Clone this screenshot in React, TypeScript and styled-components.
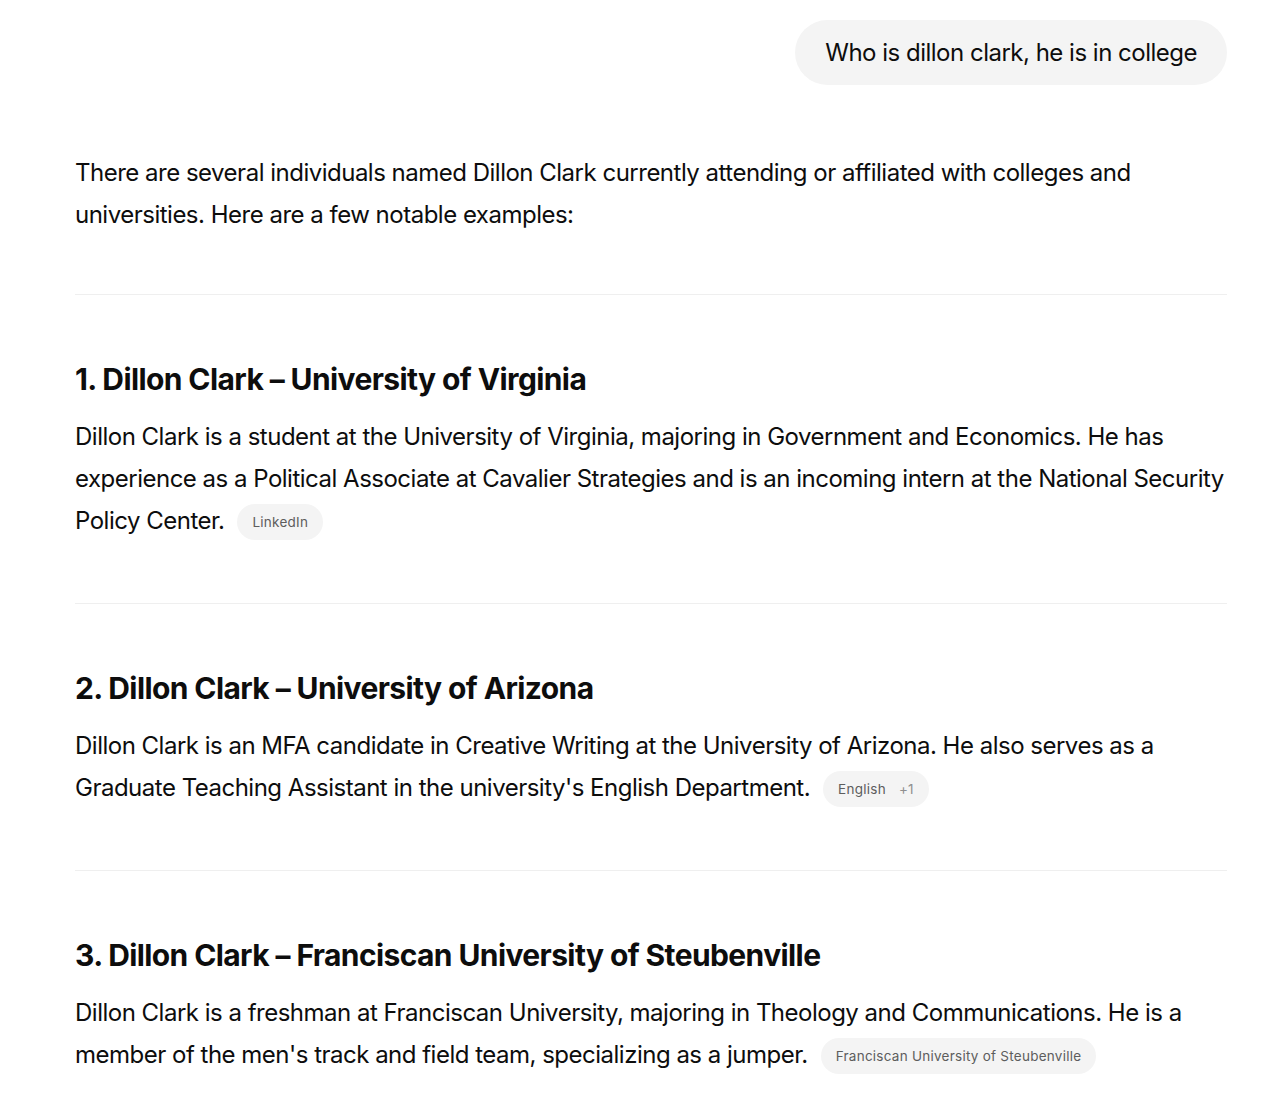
import React from "react";
import styled, { createGlobalStyle } from "styled-components";

const Global = createGlobalStyle`
  html, body { margin: 0; padding: 0; background: #ffffff; }
  body { font-family: Inter, "Noto Sans", "Liberation Sans", sans-serif; color: #0d0d0d; -webkit-font-smoothing: antialiased; }
`;

const Page = styled.main`
  width: 1152px;
  padding: 20px 0 40px 75px;
`;

const UserRow = styled.div`
  display: flex;
  justify-content: flex-end;
`;

const Bubble = styled.div`
  background: #f4f4f4;
  border-radius: 33px;
  padding: 15px 30px 15px 30px;
  font-size: 24px;
  line-height: 35px;
  letter-spacing: -0.5px;
  color: #0d0d0d;
`;

const Answer = styled.article`
  margin-top: 67px;
`;

const Para = styled.p`
  margin: 0;
  font-size: 24px;
  line-height: 42px;
  letter-spacing: -0.5px;
  color: #0d0d0d;
`;

const Divider = styled.hr<{ $first?: boolean }>`
  border: 0;
  height: 1px;
  background: #efefef;
  margin: ${(p) => (p.$first ? "58px" : "61px")} 0 64px 0;
`;

const Heading = styled.h3`
  margin: 0 0 17px 0;
  font-size: 30px;
  line-height: 40px;
  font-weight: 700;
  letter-spacing: -0.6px;
  color: #0d0d0d;
`;

const Chip = styled.span`
  display: inline-flex;
  align-items: center;
  gap: 13px;
  height: 36px;
  padding: 0 15px;
  margin-left: 13px;
  border-radius: 18px;
  background: #f4f4f4;
  font-size: 13.5px;
  letter-spacing: 0.25px;
  color: #5d5d5d;
  vertical-align: middle;
  line-height: 1;
`;

const More = styled.span`
  color: #8f8f8f;
`;

type Section = {
  title: string;
  body: string;
  chip: string;
  extra?: string;
};

const sections: Section[] = [
  {
    title: "1. Dillon Clark – University of Virginia",
    body:
      "Dillon Clark is a student at the University of Virginia, majoring in Government and Economics. He has experience as a Political Associate at Cavalier Strategies and is an incoming intern at the National Security Policy Center.",
    chip: "LinkedIn",
  },
  {
    title: "2. Dillon Clark – University of Arizona",
    body:
      "Dillon Clark is an MFA candidate in Creative Writing at the University of Arizona. He also serves as a Graduate Teaching Assistant in the university's English Department.",
    chip: "English",
    extra: "+1",
  },
  {
    title: "3. Dillon Clark – Franciscan University of Steubenville",
    body:
      "Dillon Clark is a freshman at Franciscan University, majoring in Theology and Communications. He is a member of the men's track and field team, specializing as a jumper.",
    chip: "Franciscan University of Steubenville",
  },
];

export default function App() {
  return (
    <>
      <Global />
      <Page>
        <UserRow>
          <Bubble>Who is dillon clark, he is in college</Bubble>
        </UserRow>
        <Answer>
          <Para>
            There are several individuals named Dillon Clark currently attending or affiliated with colleges and
            universities. Here are a few notable examples:
          </Para>
          {sections.map((s, i) => (
            <React.Fragment key={s.title}>
              <Divider $first={i === 0} />
              <Heading>{s.title}</Heading>
              <Para>
                {s.body}
                <Chip>
                  {s.chip}
                  {s.extra && <More>{s.extra}</More>}
                </Chip>
              </Para>
            </React.Fragment>
          ))}
        </Answer>
      </Page>
    </>
  );
}
